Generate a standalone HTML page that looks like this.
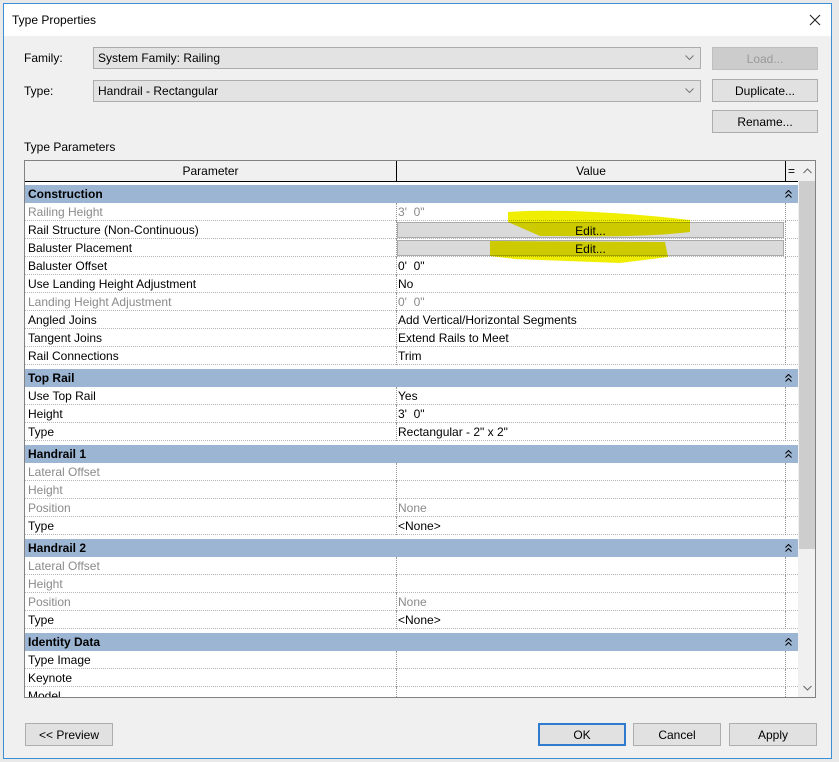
<!DOCTYPE html><html><head><style>
*{margin:0;padding:0;box-sizing:border-box}
body{width:839px;height:762px;background:#e9e9e9;font-family:"Liberation Sans",sans-serif;font-size:12px;color:#000;position:relative;overflow:hidden}
.win{position:absolute;left:3px;top:3px;width:829px;height:756px;background:#f0f0f0;border:1px solid #3c8fd6}
.ttl{position:absolute;left:0;top:0;width:827px;height:32px;background:#fff}
.a{position:absolute}
.combo{position:absolute;background:#e3e3e3;border:1px solid #adadad;height:22px;padding:3px 0 0 4px;font-size:12px}
.btn{position:absolute;background:#e1e1e1;border:1px solid #adadad;text-align:center;font-size:12px;height:23px;padding-top:4px}
.tbl{position:absolute;left:24px;top:160px;width:792px;height:538px;border:1px solid #828282;background:#fff;overflow:hidden}
.row{position:absolute;left:0;width:773px;height:18px;border-bottom:1px dotted #b5b5b5;font-size:12px}
.row .p{position:absolute;left:3px;top:2px}
.row .v{position:absolute;left:373px;top:2px}
.row .c1{position:absolute;left:371px;top:0;height:18px;border-left:1px dotted #999}
.row .c2{position:absolute;left:760px;top:0;height:18px;border-left:1px dotted #999}
.g{color:#8a8a8a}
.hd{position:absolute;left:0;width:773px;height:18px;background:#9bb5d3;font-weight:bold;font-size:12px;padding:2px 3px}
.hd svg{position:absolute;right:6px;top:5px}
.edit{position:absolute;left:372px;top:1px;width:387px;height:16px;background:#dadada;border:1px solid #aaa;text-align:center;font-size:12px;padding-top:1px}
</style></head><body>
<div class="win">
<div class="ttl"><div class="a" style="left:8px;top:9px;font-size:12px">Type Properties</div>
<svg class="a" style="left:805px;top:10px" width="12" height="12"><path d="M1 1L11 11M11 1L1 11" stroke="#222" stroke-width="1.1"/></svg></div>
<div class="a" style="left:20px;top:47px">Family:</div>
<div class="a" style="left:20px;top:80px">Type:</div>
<div class="combo" style="left:89px;top:43px;width:608px">System Family: Railing<svg style="position:absolute;right:6px;top:7px" width="9" height="6"><path d="M0.5 0.5L4.5 4.5L8.5 0.5" stroke="#777" fill="none"/></svg></div>
<div class="combo" style="left:89px;top:76px;width:608px">Handrail - Rectangular<svg style="position:absolute;right:6px;top:7px" width="9" height="6"><path d="M0.5 0.5L4.5 4.5L8.5 0.5" stroke="#777" fill="none"/></svg></div>
<div class="btn" style="left:708px;top:43px;width:106px;color:#999;background:#ccc;border-color:#bfbfbf">Load...</div>
<div class="btn" style="left:708px;top:75px;width:106px">Duplicate...</div>
<div class="btn" style="left:708px;top:106px;width:106px">Rename...</div>
<div class="a" style="left:20px;top:136px">Type Parameters</div>
</div>
<div class="tbl">
<div class="a" style="left:0;top:0;width:773px;height:21px;background:#f0f0f0;border-bottom:1px solid #000"></div>
<div class="a" style="left:0;top:3px;width:371px;text-align:center">Parameter</div>
<div class="a" style="left:371px;top:0;height:21px;border-left:1px solid #000"></div>
<div class="a" style="left:372px;top:3px;width:388px;text-align:center">Value</div>
<div class="a" style="left:760px;top:0;height:21px;border-left:1px solid #000"></div>
<div class="a" style="left:763px;top:3px">=</div>
<div class="a" style="left:773px;top:0;width:18px;height:538px;background:#f0f0f0"></div>
<div class="a" style="left:774px;top:20px;width:16px;height:368px;background:#cdcdcd"></div>
<svg class="a" style="left:778px;top:7px" width="9" height="6"><path d="M0.5 5L4.5 1L8.5 5" stroke="#666" fill="none"/></svg>
<svg class="a" style="left:778px;top:524px" width="9" height="6"><path d="M0.5 1L4.5 5L8.5 1" stroke="#666" fill="none"/></svg>

<div class="hd" style="top:24px">Construction<svg width="7" height="8"><path d="M0.5 3.5L3.5 0.5L6.5 3.5M0.5 7.5L3.5 4.5L6.5 7.5" stroke="#000" fill="none"/></svg></div>
<div class="row" style="top:42px"><span class="p g">Railing Height</span><i class="c1"></i><span class="v g">3'&nbsp; 0"</span><i class="c2"></i></div>
<div class="row" style="top:60px"><span class="p">Rail Structure (Non-Continuous)</span><i class="c1"></i><div class="edit">Edit...</div><i class="c2"></i></div>
<div class="row" style="top:78px"><span class="p">Baluster Placement</span><i class="c1"></i><div class="edit">Edit...</div><i class="c2"></i></div>
<div class="row" style="top:96px"><span class="p">Baluster Offset</span><i class="c1"></i><span class="v">0'&nbsp; 0"</span><i class="c2"></i></div>
<div class="row" style="top:114px"><span class="p">Use Landing Height Adjustment</span><i class="c1"></i><span class="v">No</span><i class="c2"></i></div>
<div class="row" style="top:132px"><span class="p g">Landing Height Adjustment</span><i class="c1"></i><span class="v g">0'&nbsp; 0"</span><i class="c2"></i></div>
<div class="row" style="top:150px"><span class="p">Angled Joins</span><i class="c1"></i><span class="v">Add Vertical/Horizontal Segments</span><i class="c2"></i></div>
<div class="row" style="top:168px"><span class="p">Tangent Joins</span><i class="c1"></i><span class="v">Extend Rails to Meet</span><i class="c2"></i></div>
<div class="row" style="top:186px"><span class="p">Rail Connections</span><i class="c1"></i><span class="v">Trim</span><i class="c2"></i></div>

<div class="hd" style="top:208px">Top Rail<svg width="7" height="8"><path d="M0.5 3.5L3.5 0.5L6.5 3.5M0.5 7.5L3.5 4.5L6.5 7.5" stroke="#000" fill="none"/></svg></div>
<div class="row" style="top:226px"><span class="p">Use Top Rail</span><i class="c1"></i><span class="v">Yes</span><i class="c2"></i></div>
<div class="row" style="top:244px"><span class="p">Height</span><i class="c1"></i><span class="v">3'&nbsp; 0"</span><i class="c2"></i></div>
<div class="row" style="top:262px"><span class="p">Type</span><i class="c1"></i><span class="v">Rectangular - 2" x 2"</span><i class="c2"></i></div>

<div class="hd" style="top:284px">Handrail 1<svg width="7" height="8"><path d="M0.5 3.5L3.5 0.5L6.5 3.5M0.5 7.5L3.5 4.5L6.5 7.5" stroke="#000" fill="none"/></svg></div>
<div class="row" style="top:302px"><span class="p g">Lateral Offset</span><i class="c1"></i><i class="c2"></i></div>
<div class="row" style="top:320px"><span class="p g">Height</span><i class="c1"></i><i class="c2"></i></div>
<div class="row" style="top:338px"><span class="p g">Position</span><i class="c1"></i><span class="v g">None</span><i class="c2"></i></div>
<div class="row" style="top:356px"><span class="p">Type</span><i class="c1"></i><span class="v">&lt;None&gt;</span><i class="c2"></i></div>

<div class="hd" style="top:378px">Handrail 2<svg width="7" height="8"><path d="M0.5 3.5L3.5 0.5L6.5 3.5M0.5 7.5L3.5 4.5L6.5 7.5" stroke="#000" fill="none"/></svg></div>
<div class="row" style="top:396px"><span class="p g">Lateral Offset</span><i class="c1"></i><i class="c2"></i></div>
<div class="row" style="top:414px"><span class="p g">Height</span><i class="c1"></i><i class="c2"></i></div>
<div class="row" style="top:432px"><span class="p g">Position</span><i class="c1"></i><span class="v g">None</span><i class="c2"></i></div>
<div class="row" style="top:450px"><span class="p">Type</span><i class="c1"></i><span class="v">&lt;None&gt;</span><i class="c2"></i></div>

<div class="hd" style="top:472px">Identity Data<svg width="7" height="8"><path d="M0.5 3.5L3.5 0.5L6.5 3.5M0.5 7.5L3.5 4.5L6.5 7.5" stroke="#000" fill="none"/></svg></div>
<div class="row" style="top:490px"><span class="p">Type Image</span><i class="c1"></i><i class="c2"></i></div>
<div class="row" style="top:508px"><span class="p">Keynote</span><i class="c1"></i><i class="c2"></i></div>
<div class="row" style="top:526px"><span class="p">Model</span><i class="c1"></i><i class="c2"></i></div>
</div>
<svg class="a" style="left:0;top:0;mix-blend-mode:multiply" width="839" height="762">
<path d="M508 212 C560 208 640 214 690 220 L690 232 C640 238 580 236 540 236 L508 222Z" fill="#f0ee00"/>
<path d="M490 241 L665 242 L668 257 L620 263 L515 259 L490 256Z" fill="#f0ee00"/>
</svg>
<div class="btn" style="left:25px;top:723px;width:88px">&lt;&lt; Preview</div>
<div class="btn" style="left:538px;top:723px;width:88px;border:2px solid #2f7bd0;background:#e1e1e1;padding-top:3px">OK</div>
<div class="btn" style="left:633px;top:723px;width:88px">Cancel</div>
<div class="btn" style="left:729px;top:723px;width:88px">Apply</div>
</body></html>
